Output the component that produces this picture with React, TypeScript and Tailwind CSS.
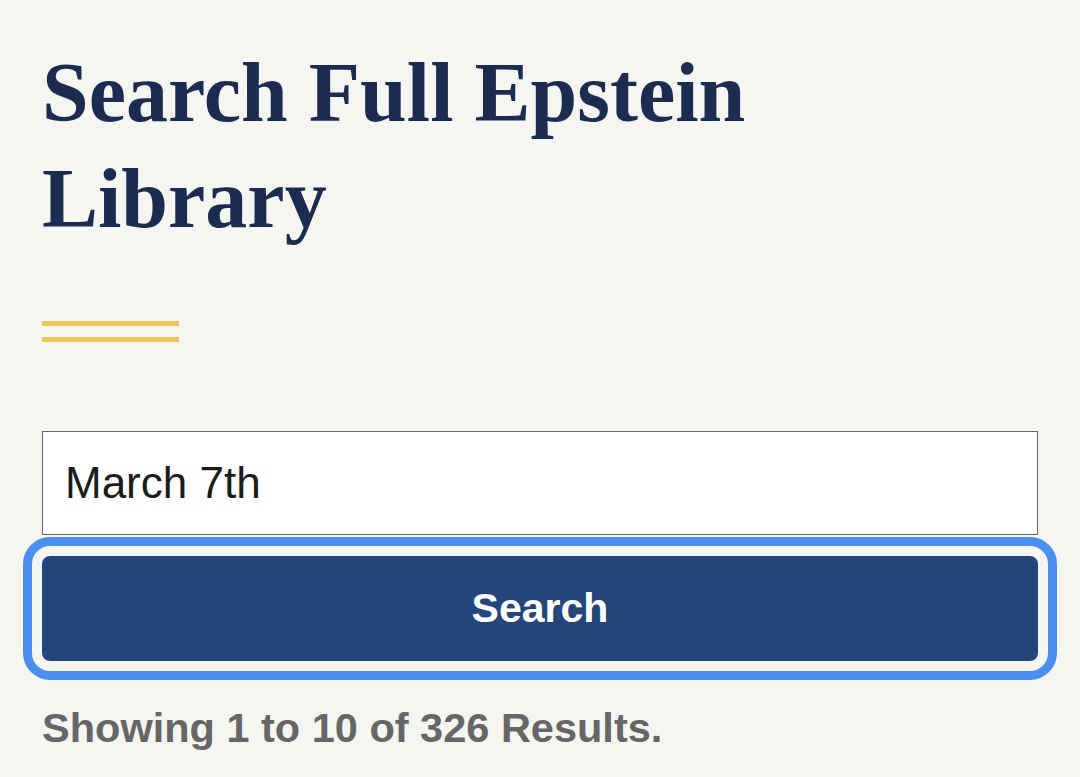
import { useState } from 'react';

export default function App() {
  const [query, setQuery] = useState('March 7th');

  return (
    <div className="min-h-screen bg-[#f5f5f1] px-[42px] pt-[40px] font-['Liberation_Sans',Arial,sans-serif]">
      {/* page title */}
      <h1 className="max-w-[820px] font-['Liberation_Serif','Times_New_Roman',serif] text-[84px] font-bold leading-[106px] text-[#1c2c50]">
        Search Full Epstein Library
      </h1>

      {/* accent rule */}
      <div className="mt-[69px] flex flex-col gap-[11px]">
        <div className="h-[5px] w-[137px] bg-[#f1c45c]" />
        <div className="h-[5px] w-[137px] bg-[#f1c45c]" />
      </div>

      {/* search form */}
      <form className="mt-[89px] flex flex-col" onSubmit={(e) => e.preventDefault()}>
        <input
          value={query}
          onChange={(e) => setQuery(e.target.value)}
          className="h-[104px] w-full border border-[#6b6b6b] bg-white pl-[22px] text-[44px] text-[#1b1b1b] outline-none"
        />
        <button
          type="submit"
          className="mt-[21px] h-[105px] w-full rounded-[8px] bg-[#25467b] text-[41px] font-bold text-white outline outline-[9px] outline-offset-[10px] outline-[#4a8ff0]"
        >
          Search
        </button>
      </form>

      <p className="mt-[43px] text-[41.5px] font-bold leading-[48px] text-[#666666]">
        Showing 1 to 10 of 326 Results.
      </p>
    </div>
  );
}
